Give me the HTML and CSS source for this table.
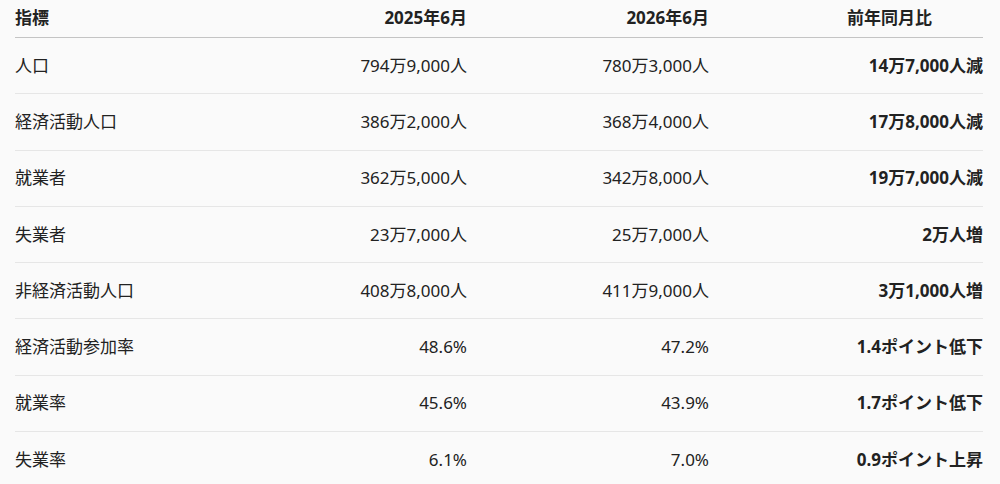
FILE: index.html
```html
<!DOCTYPE html>
<html lang="ja">
<head>
<meta charset="utf-8">
<link rel="stylesheet" href="styles.css">
</head>
<body>
<div class="wrap">
<table class="stats">
<colgroup>
<col class="c1"><col class="c2"><col class="c3"><col class="c4">
</colgroup>
<thead>
<tr><th class="l">指標</th><th>2025年6月</th><th>2026年6月</th><th class="last">前年同月比</th></tr>
</thead>
<tbody>
<tr><td class="l">人口</td><td>794万9,000人</td><td>780万3,000人</td><td class="b">14万7,000人減</td></tr>
<tr><td class="l">経済活動人口</td><td>386万2,000人</td><td>368万4,000人</td><td class="b">17万8,000人減</td></tr>
<tr><td class="l">就業者</td><td>362万5,000人</td><td>342万8,000人</td><td class="b">19万7,000人減</td></tr>
<tr><td class="l">失業者</td><td>23万7,000人</td><td>25万7,000人</td><td class="b">2万人増</td></tr>
<tr><td class="l">非経済活動人口</td><td>408万8,000人</td><td>411万9,000人</td><td class="b">3万1,000人増</td></tr>
<tr><td class="l">経済活動参加率</td><td>48.6%</td><td>47.2%</td><td class="b">1.4ポイント低下</td></tr>
<tr><td class="l">就業率</td><td>45.6%</td><td>43.9%</td><td class="b">1.7ポイント低下</td></tr>
<tr><td class="l">失業率</td><td>6.1%</td><td>7.0%</td><td class="b">0.9ポイント上昇</td></tr>
</tbody>
</table>
</div>
</body>
</html>
```

FILE: styles.css
```css
html, body {
  margin: 0;
  padding: 0;
  background: #fafafa;
}
body {
  font-family: "Noto Sans", "Noto Sans CJK JP", sans-serif;
  color: #222;
  font-size: 17px;
}
.wrap {
  padding: 0 17px 0 15px;
}
.stats {
  width: 968px;
  border-collapse: collapse;
  table-layout: fixed;
}
.c1 { width: 210px; }
.c2 { width: 242px; }
.c3 { width: 242px; }
.c4 { width: 274px; }
.stats th {
  font-weight: 700;
  text-align: right;
  height: 36px;
  padding: 0 0 1px;
  border-bottom: 1px solid #c4c4c4;
  vertical-align: middle;
  line-height: 24px;
}
.stats th.last {
  padding-right: 51px;
}
.stats td {
  text-align: right;
  height: 55.3px;
  padding: 0;
  border-bottom: 1px solid #e6e6e6;
  vertical-align: middle;
  line-height: 24px;
}
.stats tbody tr:last-child td {
  border-bottom: none;
}
.stats .l {
  text-align: left;
}
.stats .b {
  font-weight: 700;
}
```
